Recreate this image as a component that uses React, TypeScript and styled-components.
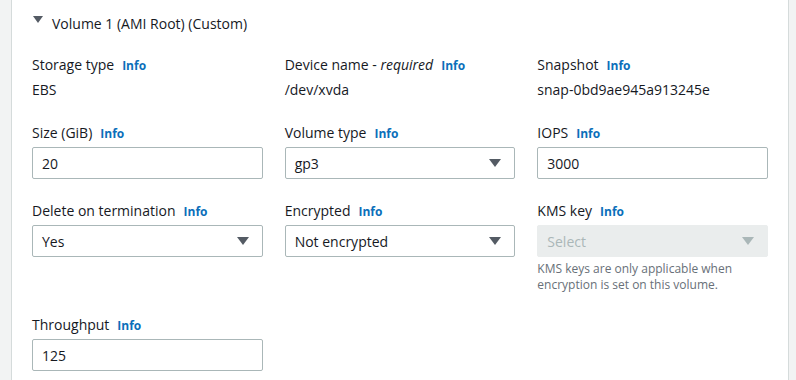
import React from "react";
import styled, { createGlobalStyle } from "styled-components";

const Global = createGlobalStyle`
  html, body { margin: 0; padding: 0; background: #f2f3f3; }
  body { font-family: "Open Sans", "Noto Sans", Arial, sans-serif; color: #16191f; }
  * { box-sizing: border-box; }
`;

const Page = styled.div`
  padding: 0 7px 0 11px;
  height: 380px;
  overflow: hidden;
`;

const Panel = styled.div`
  background: #ffffff;
  border-left: 1px solid #d5dbdb;
  border-right: 1px solid #d5dbdb;
  padding: 13px 20px 40px 20px;
  min-height: 380px;
`;

const Header = styled.div`
  display: flex;
  align-items: center;
  gap: 9px;
  height: 22px;
  font-size: 14px;
  line-height: 22px;
  margin-bottom: 19px;
`;

const Caret = styled.svg`
  width: 10px;
  height: 8px;
  margin-left: 1px;
  margin-top: -8px;
`;

const Grid = styled.div`
  display: grid;
  grid-template-columns: repeat(3, 1fr);
  column-gap: 22px;
  row-gap: 21px;
`;

const Field = styled.div`
  display: flex;
  flex-direction: column;
`;

const Label = styled.div<{ $gap?: number }>`
  font-size: 14px;
  line-height: 22px;
  margin-bottom: ${(p) => (p.$gap ?? 2)}px;
  white-space: nowrap;
`;

const Info = styled.span`
  font-size: 12px;
  font-weight: 700;
  color: #0b6fba;
  margin-left: 8px;
`;

const Value = styled.div`
  font-size: 14px;
  line-height: 22px;
  margin-top: 2px;
`;

const Box = styled.div<{ $disabled?: boolean }>`
  height: 32px;
  display: flex;
  align-items: center;
  justify-content: space-between;
  padding: 0 13px 0 9px;
  border: 1px solid ${(p) => (p.$disabled ? "#eaeded" : "#aab7b8")};
  border-radius: 2px;
  background: ${(p) => (p.$disabled ? "#eaeded" : "#ffffff")};
  color: ${(p) => (p.$disabled ? "#aab7b8" : "#16191f")};
  font-size: 14px;
`;

const Help = styled.div`
  font-size: 12px;
  line-height: 16px;
  color: #687078;
  margin-top: 4px;
`;

const Arrow = ({ color }: { color: string }) => (
  <svg width="12" height="8" viewBox="0 0 12 8">
    <polygon points="0,0 12,0 6,8" fill={color} />
  </svg>
);

const Select = ({ value, disabled }: { value: string; disabled?: boolean }) => (
  <Box $disabled={disabled}>
    <span>{value}</span>
    <Arrow color={disabled ? "#aab7b8" : "#545b64"} />
  </Box>
);

export default function App() {
  return (
    <>
      <Global />
      <Page>
        <Panel>
          <Header>
            <Caret viewBox="0 0 10 8">
              <polygon points="0,0 10,0 5,7" fill="#545b64" />
            </Caret>
            <span>Volume 1 (AMI Root) (Custom)</span>
          </Header>
          <Grid>
            <Field>
              <Label $gap={0}>Storage type<Info>Info</Info></Label>
              <Value>EBS</Value>
            </Field>
            <Field>
              <Label $gap={0}>
                Device name - <i>required</i>
                <Info>Info</Info>
              </Label>
              <Value>/dev/xvda</Value>
            </Field>
            <Field>
              <Label $gap={0}>Snapshot<Info>Info</Info></Label>
              <Value>snap-0bd9ae945a913245e</Value>
            </Field>

            <Field>
              <Label>Size (GiB)<Info>Info</Info></Label>
              <Box>20</Box>
            </Field>
            <Field>
              <Label>Volume type<Info>Info</Info></Label>
              <Select value="gp3" />
            </Field>
            <Field>
              <Label>IOPS<Info>Info</Info></Label>
              <Box>3000</Box>
            </Field>

            <Field>
              <Label>Delete on termination<Info>Info</Info></Label>
              <Select value="Yes" />
            </Field>
            <Field>
              <Label>Encrypted<Info>Info</Info></Label>
              <Select value="Not encrypted" />
            </Field>
            <Field>
              <Label>KMS key<Info>Info</Info></Label>
              <Select value="Select" disabled />
              <Help>
                KMS keys are only applicable when
                <br />
                encryption is set on this volume.
              </Help>
            </Field>

            <Field>
              <Label>Throughput<Info>Info</Info></Label>
              <Box>125</Box>
            </Field>
          </Grid>
        </Panel>
      </Page>
    </>
  );
}
